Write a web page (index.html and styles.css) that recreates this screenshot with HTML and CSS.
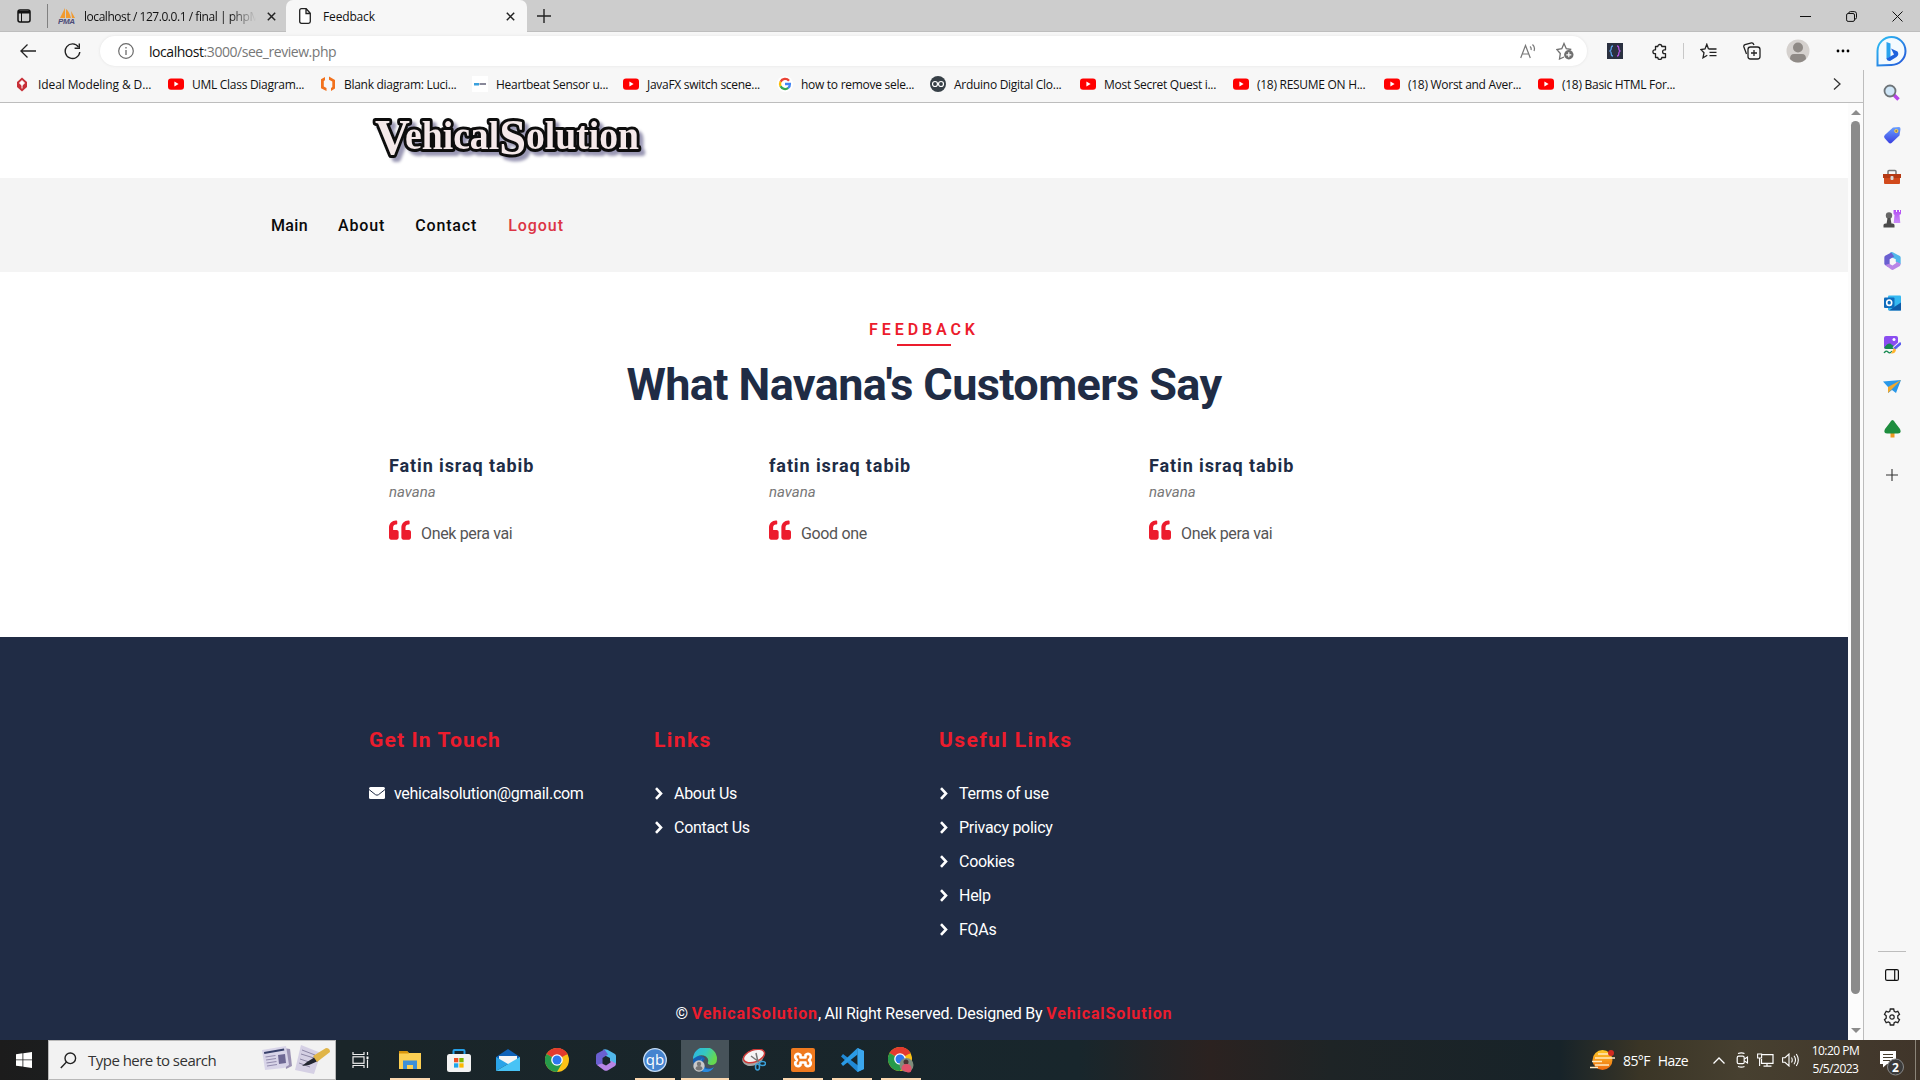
FILE: index.html
```html
<!DOCTYPE html>
<html lang="en">
<head>
<meta charset="utf-8">
<title>Feedback</title>
<link rel="stylesheet" href="styles.css">
</head>
<body>
<svg width="0" height="0" class="defs" aria-hidden="true">
  <defs>
    <linearGradient id="gBlue" x1="0" y1="0" x2="1" y2="1"><stop offset="0" stop-color="#2fc3f5"/><stop offset="1" stop-color="#2454d8"/></linearGradient>
    <linearGradient id="gPurple" x1="0" y1="0" x2="0" y2="1"><stop offset="0" stop-color="#b44df5"/><stop offset="1" stop-color="#c98bf8"/></linearGradient>
    <linearGradient id="gTag" x1="0" y1="0" x2="0" y2="1"><stop offset="0" stop-color="#6aa0ff"/><stop offset="1" stop-color="#3a3fe0"/></linearGradient>
    <linearGradient id="gEdge" x1="0" y1="0" x2="1" y2="0.4"><stop offset="0" stop-color="#2bb3e8"/><stop offset=".55" stop-color="#35c8c0"/><stop offset="1" stop-color="#66d84f"/></linearGradient>
    <linearGradient id="gHaze" x1="0" y1="0" x2="0" y2="1"><stop offset="0" stop-color="#ffc928"/><stop offset="1" stop-color="#ee6a10"/></linearGradient>
    <symbol id="yt" viewBox="0 0 16 16"><rect y="2.4" width="16" height="11.4" rx="3" fill="#f00"/><path d="M6.4 5.6v5l4.2-2.5z" fill="#fff"/></symbol>
    <symbol id="chev" viewBox="0 0 8 13"><path d="M1 1.2 6 6.5 1 11.8" fill="none" stroke="#fff" stroke-width="2.6"/></symbol>
    <symbol id="quote" viewBox="0 0 512 512"><path d="M464 256h-80v-64c0-35.300 28.700-64 64-64h8c13.300 0 24-10.700 24-24V56c0-13.300-10.700-24-24-24h-8c-88.400 0-160 71.600-160 160v240c0 26.500 21.500 48 48 48h128c26.500 0 48-21.500 48-48V304c0-26.500-21.500-48-48-48zm-288 0H96v-64c0-35.300 28.700-64 64-64h8c13.300 0 24-10.700 24-24V56c0-13.300-10.700-24-24-24h-8C71.600 32 0 103.600 0 192v240c0 26.500 21.500 48 48 48h128c26.500 0 48-21.500 48-48V304c0-26.500-21.500-48-48-48z" fill="#ec1c2d"/></symbol>
    <symbol id="m365" viewBox="0 0 20 22"><path d="M7 .8Q9-.5 11.500.8L19 5q1 .8 1 2v8l-6-3V9L8 6z" fill="#51b7ea"/><path d="M8.500.5 1 4.500Q0 5 0 7v8l4 3 2.500-2.500V9L12 5.500z" fill="#6a5fd0"/><path d="M1 16 8 21.200Q10 22.500 12 21.200L19 17q1-1 1-2.500l-5.500-3v2L10 16.500l-4-2z" fill="#b885e6"/></symbol>
    <symbol id="chrome" viewBox="0 0 24 24"><circle cx="12" cy="12" r="12" fill="#fbc116"/><path d="M12 12 1.600 6A12 12 0 0 1 22.400 6z" fill="#e33b2e"/><path d="M12 0A12 12 0 0 1 22.400 6.500H12z" fill="#e33b2e"/><path d="M1.600 6A12 12 0 0 0 12 24l5.200-9L12 12z" fill="#269a4a"/><circle cx="12" cy="12" r="5.800" fill="#fff"/><circle cx="12" cy="12" r="4.500" fill="#2d78ee"/></symbol>
  </defs>
</svg>

<div class="browser">
  <header class="tabstrip">
    <div class="tab-actions"><svg width="14" height="14" viewBox="0 0 14 14"><rect x="1" y="1" width="12" height="12" rx="2" fill="none" stroke="#111" stroke-width="1.500"/><path d="M1 3.200h12" stroke="#111" stroke-width="2.600"/><path d="M4.500 4v9" stroke="#111"/></svg></div>
    <div class="tab">
      <svg width="18" height="18" viewBox="0 0 18 18"><path d="M7 1 2 11h5zM8 2v9h5Q11 4 8 2zM13 4l1 7h3z" fill="#f29a2e"/><text x="0" y="17" class="pma" textLength="17">PMA</text></svg>
      <span class="tab-title fade ui">localhost / 127.0.0.1 / final | phpM</span>
      <svg class="tab-x" width="9" height="9" viewBox="0 0 9 9"><path d="M.8.800l7.400 7.400M8.200.800.800 8.200" stroke="#222" stroke-width="1.500"/></svg>
    </div>
    <div class="tab active">
      <svg width="12" height="16" viewBox="0 0 12 16"><path d="M.7 2.500Q.7.700 2.500.700h4.700l4.100 4.500v8.300q0 1.800-1.800 1.800h-7Q.7 15.300.7 13.500zM7 .8v4.700h4.300" fill="#fff" stroke="#222" stroke-width="1.300"/></svg>
      <span class="tab-title ui">Feedback</span>
      <svg class="tab-x" width="9" height="9" viewBox="0 0 9 9"><path d="M.8.800l7.400 7.400M8.200.800.800 8.200" stroke="#222" stroke-width="1.500"/></svg>
    </div>
    <svg class="new-tab" width="14" height="14" viewBox="0 0 14 14"><path d="M7 0v14M0 7h14" stroke="#222" stroke-width="1.400"/></svg>
    <div class="win-controls">
      <svg width="11" height="11" viewBox="0 0 11 11"><path d="M0 5.500h11" stroke="#111"/></svg>
      <svg width="11" height="11" viewBox="0 0 11 11"><rect x=".6" y="2.500" width="7.900" height="7.900" rx="1.500" fill="none" stroke="#111"/><path d="M2.700 2.300Q2.700.600 4.500.600h3.800q2.200 0 2.200 2.200v3.700q0 1.700-1.700 1.700" fill="none" stroke="#111"/></svg>
      <svg width="11" height="11" viewBox="0 0 11 11"><path d="M.5.500l10 10M10.500.5l-10 10" stroke="#111"/></svg>
    </div>
  </header>

  <div class="toolbar">
    <svg class="back" width="16" height="14" viewBox="0 0 16 14"><path d="M7.500.500.900 7l6.600 6.500M1 7h15" fill="none" stroke="#222" stroke-width="1.300"/></svg>
    <svg class="reload" width="17" height="17" viewBox="0 0 17 17"><path d="M14.500 4A7.300 7.300 0 1 0 15.800 9" fill="none" stroke="#222" stroke-width="1.400"/><path d="M15.300.500v4.700h-4.700" fill="none" stroke="#222" stroke-width="1.400"/></svg>
    <div class="address">
      <svg width="16" height="16" viewBox="0 0 16 16"><circle cx="8" cy="8" r="7.300" fill="none" stroke="#6b6b6b" stroke-width="1.200"/><path d="M8 7v5M8 4v1.500" stroke="#6b6b6b" stroke-width="1.300"/></svg>
      <span class="url ui">localhost<span class="dim">:3000/see_review.php</span></span>
      <svg class="aloud" width="17" height="16" viewBox="0 0 17 16"><path d="M.7 15 5.500 2.500 10.300 15M2.300 11h6.500M10 3.500q1.600 1.300 1 3.500M12.500 1.500q3 2.800 1.500 6.500" fill="none" stroke="#777" stroke-width="1.200"/></svg>
      <svg class="addfav" width="18" height="18" viewBox="0 0 18 18"><path d="M8 15 3.500 17l.8-5.500L.8 7.500l5-.8L8 1.500l2.300 5.200 5 .8" fill="none" stroke="#707070" stroke-width="1.300"/><circle cx="12.800" cy="12.800" r="4.700" fill="#707070"/><path d="M12.800 10.300v5M10.300 12.800h5" stroke="#fff" stroke-width="1.200"/></svg>
    </div>
    <div class="slot"><svg width="16" height="16" viewBox="0 0 16 16"><rect width="16" height="16" fill="#2a3040"/><path d="M6 3Q4.300 3 4.300 5T3 8q1.300 1 1.300 3T6 13" fill="none" stroke="#5ba1e8" stroke-width="1.300"/><path d="M10 3q1.700 0 1.700 2T13 8q-1.300 1-1.300 3T10 13" fill="none" stroke="#b054e0" stroke-width="1.300"/></svg></div>
    <div class="slot"><svg width="17" height="17" viewBox="0 0 17 17"><path d="M4.500 3.500h2.300a2 2 0 0 1 4 0h3.700v3.300h-1a1.900 1.900 0 0 0 0 3.800h1v3.900h-3.700a2 2 0 0 1-4 0H4.500v-3.900h-.7a1.900 1.900 0 0 1 0-3.800h.7z" fill="none" stroke="#222" stroke-width="1.300" stroke-linejoin="round"/></svg></div>
    <div class="sep"></div>
    <div class="slot"><svg width="17" height="16" viewBox="0 0 17 16"><path d="M8.500 6 6.800 1.300 5 6l-4.200.5L4 9.700 3 14.800l4.300-2.500M8.500 6h8M9.500 9.300h7M9.500 12.600h7" fill="none" stroke="#222" stroke-width="1.300"/></svg></div>
    <div class="slot"><svg width="18" height="18" viewBox="0 0 18 18"><rect x="5" y="5" width="12" height="12" rx="2.500" fill="none" stroke="#222" stroke-width="1.300"/><path d="M11 8v6M8 11h6M3.500 12 .9 5Q.4 3.300 2 2.700L8.500.900q1.500-.4 2.500 2" fill="none" stroke="#222" stroke-width="1.300"/></svg></div>
    <div class="slot avatar"><svg width="24" height="24" viewBox="0 0 24 24"><circle cx="12" cy="12" r="11.500" fill="#d5d1ce"/><circle cx="12" cy="8.500" r="5" fill="#8f8a86"/><path d="M4 20q0-5 4-5h8q4 0 4 5-3.500 3.500-8 3.500T4 20" fill="#8f8a86"/></svg></div>
    <div class="slot"><svg width="14" height="4" viewBox="0 0 14 4"><circle cx="2" cy="2" r="1.400"/><circle cx="7" cy="2" r="1.400"/><circle cx="12" cy="2" r="1.400"/></svg></div>
    <div class="slot bing"><svg width="31" height="31" viewBox="0 0 31 31"><path d="M1.500 29.500V15a14 14 0 1 1 14 14z" fill="#f4fafe" stroke="url(#gBlue)" stroke-width="2"/><path d="M10.500 6 14.500 7.500v13l-4 2.500z" fill="#2aa3ee"/><path d="M15 12.500 21.500 15.500q2 3-1 5.500L14 25q-3 0-3.500-2.500L18 18.500z" fill="#1f63dd"/></svg></div>
  </div>

  <div class="body-row">
    <div class="main-col">
      <nav class="bookmarks ui">
        <a><svg width="16" height="16" viewBox="0 0 16 16"><path d="M8 1.500 13 6v5L8 15.500 3 11V6z" fill="#c83038"/><path d="M8 4.500 10.500 7 8 9.500 5.500 7zM8 8.500v4" fill="#fff" stroke="#fff"/></svg><span class="wide">Ideal Modeling &amp; D...</span></a>
        <a><svg width="16" height="16"><use href="#yt"/></svg><span>UML Class Diagram...</span></a>
        <a><svg width="16" height="16" viewBox="0 0 16 16"><path d="M5 1 1 3.200v9L6.500 15v-3L3.800 10.500V5L5 4.300zM9 .5 15 4v8.500L11 15v-3l1.300-1V5.500L9 3.700z" fill="#f2711c"/></svg><span>Blank diagram: Luci...</span></a>
        <a><svg width="16" height="16" viewBox="0 0 16 16"><path d="M0 0h16v16H0z" fill="#fff"/><path d="M2 7h5v2.500H2z" fill="#3aa0dd"/><path d="M7.500 7H14v2H7.500z" fill="#889"/></svg><span>Heartbeat Sensor u...</span></a>
        <a><svg width="16" height="16"><use href="#yt"/></svg><span>JavaFX switch scene...</span></a>
        <a><svg width="16" height="16" viewBox="0 0 16 16"><circle cx="8" cy="8" r="8" fill="#fff"/><g fill="none" stroke-width="2.300"><path d="M12 4.700A5 5 0 0 0 3.600 5.800" stroke="#ea4335"/><path d="M3.600 5.600a5 5 0 0 0 0 4.800" stroke="#fbbc05"/><path d="M3.600 10.200a5 5 0 0 0 7.700 1.700" stroke="#34a853"/><path d="M8 8h4.900a5 5 0 0 1-1.700 4" stroke="#4285f4"/></g></svg><span>how to remove sele...</span></a>
        <a><svg width="16" height="16" viewBox="0 0 16 16"><circle cx="8" cy="8" r="8" fill="#374047"/><g fill="none" stroke="#fff" stroke-width="1.200"><circle cx="5" cy="8" r="2.500"/><circle cx="11" cy="8" r="2.500"/></g></svg><span>Arduino Digital Clo...</span></a>
        <a><svg width="16" height="16"><use href="#yt"/></svg><span>Most Secret Quest i...</span></a>
        <a><svg width="16" height="16"><use href="#yt"/></svg><span>(18) RESUME ON H...</span></a>
        <a><svg width="16" height="16"><use href="#yt"/></svg><span>(18) Worst and Aver...</span></a>
        <a><svg width="16" height="16"><use href="#yt"/></svg><span>(18) Basic HTML For...</span></a>
        <svg class="more" width="8" height="12" viewBox="0 0 8 12"><path d="M1 .5 7 6 1 11.500" fill="none" stroke="#333" stroke-width="1.300"/></svg>
      </nav>
      <div class="viewport">
        <div class="page">
          <div class="brand">
            <svg width="290" height="75" viewBox="0 0 290 75"><text x="5" y="46" class="logo" textLength="264" lengthAdjust="spacingAndGlyphs"><tspan class="cap" dy="5">V</tspan><tspan dx="-5" dy="-5">ehical</tspan><tspan class="cap" dy="5">S</tspan><tspan dy="-5">olution</tspan></text></svg>
          </div>
          <nav class="site-nav"><a>Main</a><a>About</a><a>Contact</a><a class="logout">Logout</a></nav>
          <main class="feedback">
            <p class="eyebrow">FEEDBACK</p>
            <h1>What Navana's Customers Say</h1>
            <div class="reviews">
              <article><h2>Fatin israq tabib</h2><p class="company">navana</p><p class="say"><svg width="22" height="22"><use href="#quote"/></svg><span>Onek pera vai</span></p></article>
              <article><h2>fatin israq tabib</h2><p class="company">navana</p><p class="say"><svg width="22" height="22"><use href="#quote"/></svg><span>Good one</span></p></article>
              <article><h2>Fatin israq tabib</h2><p class="company">navana</p><p class="say"><svg width="22" height="22"><use href="#quote"/></svg><span>Onek pera vai</span></p></article>
            </div>
          </main>
          <footer class="site-footer">
            <div class="cols">
              <section><h3 class="tight">Get In Touch</h3><ul><li><svg class="mail" width="16" height="12" viewBox="0 0 16 12"><rect width="16" height="12" rx="1.500" fill="#fff"/><path d="M0 2.500 6.500 7.700q1.500 1 3 0L16 2.500" fill="none" stroke="#202c45"/></svg><span>vehicalsolution@gmail.com</span></li></ul></section>
              <section class="links"><h3>Links</h3><ul>
                <li><svg width="8" height="13"><use href="#chev"/></svg><span>About Us</span></li>
                <li><svg width="8" height="13"><use href="#chev"/></svg><span>Contact Us</span></li></ul></section>
              <section class="links"><h3>Useful Links</h3><ul>
                <li><svg width="8" height="13"><use href="#chev"/></svg><span>Terms of use</span></li>
                <li><svg width="8" height="13"><use href="#chev"/></svg><span>Privacy policy</span></li>
                <li><svg width="8" height="13"><use href="#chev"/></svg><span>Cookies</span></li>
                <li><svg width="8" height="13"><use href="#chev"/></svg><span>Help</span></li>
                <li><svg width="8" height="13"><use href="#chev"/></svg><span>FQAs</span></li></ul></section>
            </div>
            <p class="copyright">© <b>VehicalSolution</b>, All Right Reserved. Designed By <b>VehicalSolution</b></p>
          </footer>
        </div>
        <div class="scrollbar"><i class="up"></i><i class="thumb"></i><i class="down"></i></div>
      </div>
    </div>
    <aside class="sidebar">
      <div class="side-top">
        <svg width="18" height="18" viewBox="0 0 18 18"><path d="m11 11 4.500 4.500" stroke="#b645e8" stroke-width="3.500"/><circle cx="7" cy="7" r="5.500" fill="#cfe6f7" stroke="#6e7478" stroke-width="1.800"/></svg>
        <svg width="18" height="18" viewBox="0 0 18 18"><path d="M10 1.500 16 1q1.500 0 1.500 2l-1 6.500-8 7.500q-1.500 1-3-.5L1.500 12q-1-1.500.3-3z" fill="url(#gTag)"/><circle cx="13.300" cy="5" r="1.600" fill="#9a8a50" stroke="#ffd34e"/></svg>
        <svg width="18" height="16" viewBox="0 0 18 16"><path d="M5 5V2.500q0-1 1-1h6q1 0 1 1V5" fill="none" stroke="#777" stroke-width="1.500"/><rect x="1" y="8" width="16" height="7" rx="1" fill="#d24a1c"/><path d="M0 5h18v4H0z" fill="#b53a14"/><rect x="7.500" y="7" width="3" height="4" rx="1" fill="#d8d8d8"/></svg>
        <svg width="18" height="18" viewBox="0 0 18 18"><path d="M10.500 0H13v2h1V0h2v2h1V0h1v4l-1.500 1 .8 8h-6.600l.8-8-1-1z" fill="url(#gPurple)"/><circle cx="6" cy="5.500" r="3.200" fill="#666"/><path d="M4.500 8h3l1 6h-5zM.5 15q0-1.500 2-1.500h7q2 0 2 1.500v2.500H.5z" fill="#4b4b4b"/></svg>
        <svg width="17" height="18"><use href="#m365"/></svg>
        <svg width="17" height="17" viewBox="0 0 17 17"><rect x="4" y="1" width="13" height="15" rx="1" fill="#35b8f1"/><path d="M17 8v8H5l6-4z" fill="#0f5ba8"/><rect y="3" width="10.500" height="10.500" rx="1" fill="#0f6cbd"/><ellipse cx="5.200" cy="8.200" rx="2.500" ry="2.700" fill="none" stroke="#fff" stroke-width="1.600"/></svg>
        <svg width="18" height="18" viewBox="0 0 18 18"><rect x="1" width="14" height="13" rx="2" fill="#8a4df0"/><path d="M1 12q5-7 8-3l6 3v1H3z" fill="#168a50"/><circle cx="11" cy="3.500" r="1.500" fill="#fff"/><path d="M1 17q2-3 4-1 2 2 4-1" fill="none" stroke="#168a50" stroke-width="1.300"/><path d="m18 7-7 6" stroke="#f7f7f7" stroke-width="4.500"/><path d="m18 7-7 6" stroke="#5b5cf0" stroke-width="2.700"/><path d="m11 12 2 2q-1 4-5 3.500z" fill="#ffb52e"/></svg>
        <svg width="18" height="14" viewBox="0 0 18 14"><path d="M0 1.500 18 0 13 13 9 10 5 13 5 7z" fill="#2a98e8"/><path d="M5 13V7l13-7-9 9z" fill="#f3a92b"/></svg>
        <svg width="17" height="18" viewBox="0 0 17 18"><path d="M6.500 12h4v5.500h-4z" fill="#ee9a22"/><path d="M8.500 0Q10 0 11 2.500L16 9q2 4.500-2 4.500H3Q-1 13.500 1 9l5-6.500Q7 0 8.500 0" fill="#1e8d3e"/></svg>
        <svg width="12" height="12" viewBox="0 0 12 12"><path d="M6 0v12M0 6h12" stroke="#333" stroke-width="1.100"/></svg>
      </div>
      <div class="side-bottom">
        <svg width="14" height="12" viewBox="0 0 14 12"><rect x=".6" y=".6" width="12.800" height="10.800" rx="1.500" fill="none" stroke="#111" stroke-width="1.200"/><path d="M9.700.5v11" stroke="#111" stroke-width="1.200"/></svg>
        <svg width="18" height="18" viewBox="0 0 18 18"><path d="M7.300 1h3.400l.5 2.300 1.400.8 2.200-.8 1.700 3-1.700 1.500v2.400l1.700 1.500-1.700 3-2.200-.8-1.400.8-.5 2.300H7.300l-.5-2.300-1.400-.8-2.200.8-1.700-3 1.700-1.500V7.800L1.500 6.300l1.700-3 2.200.8 1.400-.8z" fill="none" stroke="#222" stroke-width="1.300"/><circle cx="9" cy="9" r="2.200" fill="none" stroke="#222" stroke-width="1.200"/></svg>
      </div>
    </aside>
  </div>
</div>

<div class="taskbar">
  <div class="start"><svg width="16" height="16" viewBox="0 0 16 16"><path d="M0 2.200 6.500 1.300v6.200H0zM7.300 1.200 16 0v7.500H7.300zM0 8.300h6.500v6.300L0 13.700zM7.300 8.300H16V16l-8.700-1.200z" fill="#fff"/></svg></div>
  <div class="search ui">
    <svg width="17" height="17" viewBox="0 0 17 17"><circle cx="10.300" cy="6.300" r="5.300" fill="none" stroke="#222" stroke-width="1.400"/><path d="M6.500 10 .8 16" stroke="#222" stroke-width="1.400"/></svg>
    <span>Type here to search</span>
    <svg class="art" width="70" height="32" viewBox="0 0 70 32"><path d="m22 4 7 1 2 17-6 3z" fill="#9c93b4"/><path d="M1 6 25 2l3 19-5 3-19 2z" fill="#d8d4e8"/><path d="m3 8 20-3.500.3 2L3.300 10z" fill="#38406a"/><path d="m17 11 7-1 1 9-7 1z" fill="#6e6894"/><path d="m4.500 13 10-1.500M5 16l10-1.500M5.500 19l10-1.500M6 22l10-1.500" stroke="#938cae" stroke-width="1.200"/><path d="M40 1 60 9 53 30 34 26z" fill="#d5d0e4"/><path d="m41 6 13 5m-14-1 13 4m-14 1 12 4m-13 0 11 4" stroke="#8d87a5"/><path d="m41 22 5-4 8-5 3 4-9 4z" fill="#222630"/><path d="m52 12 13-8q4 0 4 4L56 18z" fill="#e0b548"/></svg>
  </div>
  <div class="apps">
    <div class="app"><svg width="17" height="16" viewBox="0 0 17 16"><path d="M1 0v2.500h11V0M1 16v-2.500h11V16M15.500 0v3M15.500 7.500V16" fill="none" stroke="#eee" stroke-width="1.200"/><rect x="1" y="4.800" width="11" height="6.500" fill="none" stroke="#eee" stroke-width="1.200"/><path d="M14.500 4.500h2v2.500h-2z" fill="#fff"/></svg></div>
    <div class="app run"><svg width="22" height="18" viewBox="0 0 22 18"><path d="M0 0h8l2 2h12v16H0z" fill="#fccf53"/><path d="M0 0h8l2 2.500H0z" fill="#d9950c"/><path d="M4 18V9.500h14V18h-4v-4H8v4z" fill="#3d8fd8"/></svg></div>
    <div class="app"><svg width="24" height="23" viewBox="0 0 24 23"><path d="M6.500 7V2q0-1 1-1h9q1 0 1 1v5" fill="none" stroke="#26a0e8" stroke-width="2"/><rect y="5" width="24" height="18" rx="2.500" fill="#f3f3f3"/><path d="M7 9h4.300v4.300H7z" fill="#ee4f24"/><path d="M12.300 9h4.300v4.300h-4.300z" fill="#7db700"/><path d="M7 14.300h4.300v4.300H7z" fill="#1ea5ea"/><path d="M12.300 14.300h4.300v4.300h-4.300z" fill="#fbb800"/></svg></div>
    <div class="app"><svg width="24" height="22" viewBox="0 0 24 22"><path d="M0 8 12 0l12 8v3H0z" fill="#0f62b8"/><path d="M3 7h18v8H3z" fill="#f5f5f5"/><path d="m0 8 12 7L0 22z" fill="#2aa3e8"/><path d="m24 8-12 7L0 22h24z" fill="#48c3f5"/></svg></div>
    <div class="app"><svg width="24" height="24"><use href="#chrome"/></svg></div>
    <div class="app"><svg width="20" height="22"><use href="#m365"/></svg></div>
    <div class="app run"><svg width="24" height="24" viewBox="0 0 24 24"><circle cx="12" cy="12" r="11.300" fill="#4584cf" stroke="#c5dcf5" stroke-width="1.300"/><text x="12" y="16.500" text-anchor="middle" class="qb">qb</text></svg></div>
    <div class="app run current"><svg width="24" height="24" viewBox="0 0 24 24"><path d="M12 24A12 12 0 0 1 0 12Q1 7 7 8q4 0 5 3-3 2-1.500 6 3 5 10 3-3 4-8.500 4" fill="#1660b5"/><path d="M0 11A12 12 0 0 1 24 11q0 6-6 6-4-.5-3-3 1-3-2-5.500Q7 5 0 11" fill="url(#gEdge)"/><path d="M9.500 10Q6 16 11 20q5 3 10-1-4 6-10 5-5-2-5-8 0-4 3.500-6" fill="#2a8ade"/><circle cx="6" cy="18" r="5.700" fill="#c9c9c9"/><circle cx="6" cy="16" r="2.200" fill="#777"/><path d="M2.500 21q0-3 3.500-3t3.500 3Q6 24 2.500 21" fill="#777"/></svg></div>
    <div class="app"><svg width="24" height="22" viewBox="0 0 24 22"><ellipse cx="11" cy="9" rx="11" ry="7.500" transform="rotate(-20 11 9)" fill="#a5a5a5"/><ellipse cx="12" cy="7" rx="11" ry="6" transform="rotate(-20 12 7)" fill="#f4f4f4" stroke="#cf3a38" stroke-width="1.500"/><path d="m14 4 2 9M9 7l8 6" stroke="#777" stroke-width="1.500"/><g fill="none" stroke="#3b9fd8" stroke-width="1.500"><ellipse cx="15.500" cy="18" rx="2" ry="3"/><ellipse cx="20.500" cy="14.500" rx="3" ry="2"/></g></svg></div>
    <div class="app run"><svg width="24" height="24" viewBox="0 0 24 24"><rect width="24" height="24" rx="2" fill="#ef7a1f"/><g fill="none" stroke="#fff" stroke-width="2.600" stroke-linejoin="round"><path d="M6 12Q3 9 5 6.500 7.500 5 9.500 7v2.500h5V7q2-2 4.500-.5 2 2.500-1 5.500 3 3 1 5.500-2.500 1.500-4.500-.5v-2.500h-5V17q-2 2-4.500.5Q3 15 6 12z"/></g></svg></div>
    <div class="app run"><svg width="24" height="24" viewBox="0 0 24 24"><path d="M17.500 0 24 3v18l-6.500 3L1 8.500 3 6l15 11.500z" fill="#2089d6"/><path d="M17.500 0v6.500L3 18 1 15.500z" fill="#2a9be6"/><path d="m17.500 0 6.500 3v18l-6.500 3z" fill="#3ba7ee"/></svg></div>
    <div class="app run"><svg width="26" height="26" viewBox="0 0 26 26"><use href="#chrome" width="24" height="24"/><circle cx="18.500" cy="18" r="7" fill="#7f8d7c"/><circle cx="18" cy="15" r="2.500" fill="#4a3535"/><path d="M13.500 22q0-5 5-5t5 5-5 3-5-3" fill="#e0526a"/></svg></div>
  </div>
  <div class="weather ui">
    <svg width="25" height="22" viewBox="0 0 25 22"><circle cx="12.500" cy="11" r="10" fill="url(#gHaze)"/><path d="M8 5h12M5 9h20M2 12.500h10M5 16h14M0 18.500h8" stroke="#ffe9c0" stroke-width="1.500"/><circle cx="21" cy="4" r="3" fill="#cf2a20"/></svg>
    <span>85°F</span><span>Haze</span>
  </div>
  <div class="tray">
    <svg width="12" height="7" viewBox="0 0 12 7"><path d="M.5 6.500 6 1l5.500 5.500" fill="none" stroke="#fff" stroke-width="1.300"/></svg>
    <svg class="meet" width="13" height="16" viewBox="0 0 13 16"><rect x="1.200" y="4.200" width="7" height="7.500" rx="1.500" fill="none" stroke="#fff" stroke-width="1.200"/><path d="m8.500 7 3-2v6l-3-2M2 1.600q3.500-1.500 6.500 0M2 14.400q3.500 1.500 6.500 0" fill="none" stroke="#fff" stroke-width="1.100"/></svg>
    <svg width="17" height="14" viewBox="0 0 17 14"><path d="M5 1.600h11v8.800H4.500V6M10 10.500V13M6.500 13.200h8" fill="none" stroke="#fff" stroke-width="1.200"/><path d="M.6 1h4v4h-4zM2.600 5v8" fill="none" stroke="#fff" stroke-width="1.100"/></svg>
    <svg width="17" height="14" viewBox="0 0 17 14"><path d="M.6 4.700H3L7 1v12L3 9.300H.6zM9.500 4.500q1.500 2.500 0 5M12 2.800q3 4.200 0 8.400M14.300 1q4 6 0 12" fill="none" stroke="#fff" stroke-width="1.100"/></svg>
  </div>
  <div class="clock ui"><span>10:20 PM</span><span>5/5/2023</span></div>
  <div class="notices"><svg width="26" height="26" viewBox="0 0 26 26"><path d="M1 1h16v13H8l-4 3.500V14H1z" fill="#fff"/><path d="M4 4.500h10M4 7.500h10M4 10.500h7" stroke="#463d2e"/><circle cx="16.500" cy="17" r="8" fill="#3b3b3b" stroke="#8a8a8a"/><text x="13" y="21.500" class="count">2</text></svg></div>
</div>
</body>
</html>
```
FILE: styles.css
```css
* { box-sizing: border-box; }
body { margin: 0; width: 1920px; height: 1080px; overflow: hidden; background: #f7f7f7; color: #111; font-family: Roboto, sans-serif; }
svg { display: block; flex: none; }
h1, h2, h3, p, ul { margin: 0; padding: 0; }
ul { list-style: none; }
.defs { position: absolute; }
.ui { font-family: "Open Sans", "Noto Sans", sans-serif; font-size: 12px; white-space: nowrap; }

.browser { height: 1040px; display: flex; flex-direction: column; }
.tabstrip { height: 32px; flex: none; display: flex; align-items: center; background: #cdcdcd; box-shadow: inset 0 -1px #bebebe; }
.tab-actions { width: 48px; height: 24px; padding-left: 17px; display: flex; align-items: center; border-right: 1px solid #808080; }
.tab { width: 238px; height: 32px; padding: 0 10px; display: flex; align-items: center; gap: 8px; }
.tab-title { flex: 1; letter-spacing: -0.15px; }
.tab-title.fade { margin-right: -12px; letter-spacing: -0.45px; -webkit-mask-image: linear-gradient(90deg, #000 78%, transparent 92%); mask-image: linear-gradient(90deg, #000 78%, transparent 92%); }
.tab.active { width: 241px; padding: 0 12px 0 13px; gap: 12px; background: #f7f7f7; border-radius: 7px 7px 0 0; }
.new-tab { margin-left: 10px; }
.win-controls { margin-left: auto; width: 138px; display: flex; justify-content: space-around; }
.pma { font: italic bold 8px "Liberation Sans", sans-serif; fill: #4c4c78; }

.toolbar { height: 38px; flex: none; display: flex; align-items: center; }
.back { margin-left: 20px; }
.reload { margin: 0 19px 0 28px; }
.address { width: 1487px; height: 30px; margin-right: 6px; padding: 0 13px 0 18px; display: flex; align-items: center; border-radius: 15px; background: #fff; box-shadow: 0 0 3px #e2e2e2; }
.url { margin-left: 15px; font-size: 14px; flex: 1; letter-spacing: -0.45px; }
.dim { color: #777; }
.aloud { margin-right: 19px; }
.slot { width: 44px; display: flex; justify-content: center; }
.sep { width: 1px; height: 16px; margin: 0 2px; background: #c8c8c8; }
.slot.avatar { width: 47px; }
.slot.bing { width: 52px; }

.body-row { flex: 1; min-height: 0; display: flex; }
.main-col { width: 1863px; display: flex; flex-direction: column; }
.bookmarks { height: 33px; flex: none; padding: 0 22px 4px 14px; display: grid; grid-template-columns: 154px 152px 152px 151px 154px 153px 150px 153px 151px 154px 1fr auto; align-items: center; border-bottom: 1px solid #bdbdbd; letter-spacing: -0.28px; }
.bookmarks .wide { letter-spacing: -0.1px; }
.bookmarks a { display: flex; align-items: center; gap: 8px; }
.viewport { flex: 1; display: flex; }
.page { width: 1848px; display: flex; flex-direction: column; background: #fff; }
.scrollbar { width: 15px; padding: 7px 3px 7px; display: flex; flex-direction: column; align-items: center; background: #fcfcfc; }
.up, .down { border: 5px solid transparent; border-top: 0; border-bottom: 5px solid #8b8b8b; }
.down { border-top: 5px solid #8b8b8b; border-bottom: 0; margin-top: auto; }
.thumb { width: 9px; height: 873px; margin-top: 6px; border-radius: 5px; background: #8b8b8b; }
.sidebar { width: 57px; border-left: 1px solid #bdbdbd; display: flex; flex-direction: column; align-items: center; justify-content: space-between; }
.side-top { padding-top: 1px; display: flex; flex-direction: column; align-items: center; }
.side-top svg { margin: 13px 0 11px; height: 18px; }
.side-top svg:last-child { margin-top: 17px; }
.side-bottom { width: 28px; height: 89px; padding: 17px 0 14px; border-top: 1px solid #bdbdbd; display: flex; flex-direction: column; align-items: center; justify-content: space-between; }

.brand { height: 75px; padding-left: 370px; }
.logo { font: bold 39px "Liberation Serif", serif; fill: #f5e9ea; stroke: #0d0d0d; stroke-width: 6px; stroke-linejoin: round; paint-order: stroke; filter: drop-shadow(4px 4px 1.5px #9a98b4); }
.logo .cap { font-size: 50px; }
.site-nav { height: 94px; padding-left: 271px; display: flex; align-items: center; gap: 30px; background: #f4f4f4; font-size: 16px; font-weight: 500; letter-spacing: 0.85px; color: #0a0a0a; }
.site-nav a:first-child { letter-spacing: 0.35px; }
.site-nav .logout { margin-left: 1px; color: #dc3545; letter-spacing: 0.95px; }
.feedback { height: 365px; padding-top: 48px; }
.eyebrow { width: 106px; margin: 0 auto; color: #ec1c2d; font-size: 16px; line-height: 20px; font-weight: 600; letter-spacing: 3.9px; display: flex; flex-direction: column; align-items: center; white-space: nowrap; }
.eyebrow::after { content: ""; width: 54px; height: 2px; margin-top: 4px; background: #ec1c2d; }
h1 { margin-top: 12px; text-align: center; color: #202c45; font-size: 45px; line-height: 54px; font-weight: 700; letter-spacing: -0.6px; }
.reviews { margin: 42px 0 0 389px; display: grid; grid-template-columns: repeat(3, 380px); color: #202c45; }
h2 { font-size: 18px; line-height: 24px; font-weight: 700; letter-spacing: 0.9px; }
.company { margin-top: 3px; color: #777; font-size: 15px; line-height: 22px; font-style: italic; font-weight: 400; }
.say { margin-top: 16px; display: flex; align-items: center; gap: 10px; color: #555; font-size: 16px; line-height: 28px; letter-spacing: -0.35px; }
.say svg { margin-bottom: 8px; }
.site-footer { flex: 1; padding: 86px 0 0 369px; background: #202c45; color: #fff; font-size: 16px; }
.cols { height: 274px; display: grid; grid-template-columns: 285px 285px 285px; }
h3 { margin-bottom: 19px; color: #ec1c2d; font-size: 21px; line-height: 34px; font-weight: 700; letter-spacing: 1.4px; }
h3.tight { letter-spacing: 1.15px; }
li { height: 34px; display: flex; align-items: center; gap: 9px; letter-spacing: -0.28px; }
.links li { gap: 11px; padding-left: 1px; }
.copyright { width: 1848px; margin-left: -369px; text-align: center; line-height: 34px; letter-spacing: -0.23px; }
.copyright b { color: #ec1c2d; letter-spacing: 0.9px; }

.taskbar { height: 40px; display: flex; align-items: center; color: #fff; background: linear-gradient(90deg, #1c1c1c 0, #1a2529 340px, #18262c 1080px, #2b2220 1210px, #1e2426 1330px, #172329 1560px, #3a3526 1640px, #474030 1740px, #40352a 1920px); }
.start { width: 48px; display: flex; justify-content: center; }
.search { width: 288px; height: 40px; padding: 0 4px 0 11px; display: flex; align-items: center; gap: 11px; background: #f2f2f2; border: 1px solid #b8b8b8; color: #333; font-size: 15px; letter-spacing: -0.52px; }
.art { margin-left: auto; }
.apps { width: 589px; display: flex; justify-content: space-between; }
.app { width: 48px; height: 40px; display: flex; align-items: center; justify-content: center; background: linear-gradient(#fbd8b0, #fbd8b0) center bottom / 0 2px no-repeat; }
.app:first-child { margin-right: 1px; }
.app.run { background-size: 40px 2px; }
.app.current { background-color: #47535a; background-size: 48px 2px; }
.qb { font: 15px "Open Sans", sans-serif; fill: #fff; }
.weather { width: 123px; margin-left: 665px; display: flex; align-items: center; gap: 8px; font-size: 14px; letter-spacing: -0.6px; }
.tray { width: 86px; display: flex; align-items: center; justify-content: space-between; }
.meet { margin-left: 3px; }
.clock { width: 73px; display: flex; flex-direction: column; align-items: center; line-height: 18px; letter-spacing: -0.5px; }
.notices { padding-left: 7px; width: 44px; height: 40px; padding-top: 10px; border-right: 1px solid #8b8478; }
.count { font: bold 12px "Open Sans", sans-serif; fill: #fff; }
```
